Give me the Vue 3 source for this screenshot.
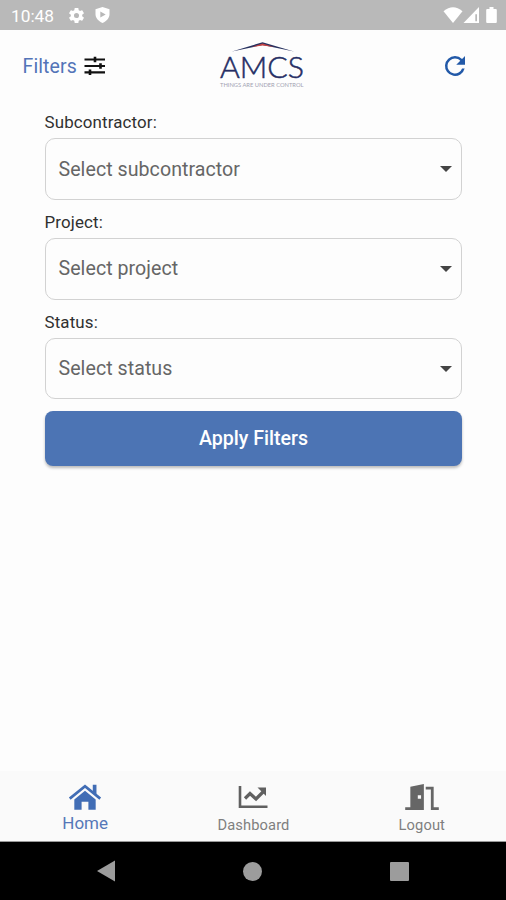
<script setup>
const fields = [
  { label: 'Subcontractor:', hint: 'Select subcontractor' },
  { label: 'Project:', hint: 'Select project' },
  { label: 'Status:', hint: 'Select status' },
]
</script>

<template>
  <div class="screen">
    <div class="status">
      <span class="time">10:48</span>
      <svg class="gear" width="19" height="19" viewBox="0 0 24 24"><path fill="#fff" fill-rule="evenodd" d="M19.14 12.94a7 7 0 0 0 0-1.88l2.03-1.58c.18-.14.23-.4.12-.61l-1.92-3.32c-.12-.22-.37-.29-.59-.22l-2.39.96a7 7 0 0 0-1.62-.94L14.4 2.81a.48.48 0 0 0-.48-.41h-3.84a.47.47 0 0 0-.47.41l-.36 2.54a7 7 0 0 0-1.62.94l-2.39-.96a.47.47 0 0 0-.59.22L2.74 8.87a.47.47 0 0 0 .12.61l2.03 1.58a7 7 0 0 0 0 1.88l-2.03 1.58c-.18.14-.23.4-.12.61l1.92 3.32c.12.22.37.29.59.22l2.39-.96c.5.38 1.03.7 1.62.94l.36 2.54c.05.24.24.41.48.41h3.84c.24 0 .44-.17.47-.41l.36-2.54a7 7 0 0 0 1.62-.94l2.39.96c.22.08.47 0 .59-.22l1.92-3.32a.47.47 0 0 0-.12-.61zM12 15.2a3.2 3.2 0 1 1 0-6.4 3.2 3.2 0 0 1 0 6.4z" /></svg>
      <svg class="shield" width="15" height="16" viewBox="0 0 15 16"><path fill="#fff" d="M7.500 0 14.500 2.200V7c0 4-2.600 7-7 8.900C3.100 14 .5 11 .5 7V2.200z" /><path fill="#b8b8b8" d="M5.300 4.600v6l5.400-3z" /></svg>
      <svg class="signals" width="56" height="18" viewBox="0 0 56 18">
        <path fill="#fff" d="M.5 5.200Q10 -2.600 19.500 5.200L10 17z" />
        <path fill="#fff" fill-rule="evenodd" d="M36 1v16H20.500zM32.300 8.300v7h1.700v-7z" />
        <path fill="#fff" d="M46.500 1h4v2h2.300q1 0 1 1v12q0 1-1 1h-8.600q-1 0-1-1V4q0-1 1-1h2.300z" />
      </svg>
    </div>

    <header class="bar">
      <div class="filters">
        <span>Filters</span>
        <svg width="22" height="20" viewBox="0 0 22 20" fill="none" stroke="#111" stroke-width="2.200"><path d="M.5 3.500h20.500M.5 10h20.500M.5 16.300h20.500" /><path stroke-width="2.600" d="M11 .7v5.600M16.500 7.200v5.600M6 13.500v5.600" /></svg>
      </div>
      <svg class="logo" width="90" height="50" viewBox="0 0 90 50">
        <path fill="#26305f" d="M14 10.500 44.500 1.200 76 10.500 44.500 4z" />
        <path fill="#c84343" d="M34 5.900 44.500 2.400 56 5.900 44.500 4.600z" />
        <text class="brand" x="2" y="37.200" textLength="84" lengthAdjust="spacingAndGlyphs">AMCS</text>
        <text class="tag" x="2" y="46.400" textLength="83.500" lengthAdjust="spacingAndGlyphs">THINGS ARE UNDER CONTROL</text>
      </svg>
      <svg class="refresh" width="30" height="30" viewBox="0 0 24 24"><path fill="#2259a8" d="M17.650 6.350A7.960 7.960 0 0 0 12 4a8 8 0 1 0 7.730 10h-2.080A6 6 0 1 1 12 6c1.660 0 3.140.69 4.220 1.780L13 11h7V4z" /></svg>
    </header>

    <main class="form">
      <div v-for="f in fields" :key="f.label" class="field">
        <label>{{ f.label }}</label>
        <div class="select">
          <span>{{ f.hint }}</span>
          <svg width="12" height="6" viewBox="0 0 12 6"><path fill="#444" d="M0 0h12L6 6z" /></svg>
        </div>
      </div>
      <button class="apply">Apply Filters</button>
    </main>

    <nav class="tabs">
      <div class="tab active">
        <svg width="34" height="28" viewBox="-.5 0 35 28"><path fill="none" stroke="#416db5" stroke-width="2.800" d="M1.300 15.700 17 2.900l15.700 12.800" /><path fill="#416db5" d="M25 1.500h3.800v10L25 8.300zM17 7.500l11 9V27h-7.500v-8h-7v8H6V16.500z" /></svg>
        <span>Home</span>
      </div>
      <div class="tab">
        <svg width="34" height="28" viewBox="0 0 34 28"><path fill="none" stroke="#606060" stroke-width="2.600" d="M4 3v20.700h27.500" /><path fill="none" stroke="#606060" stroke-width="3.200" d="m9 15.500 5-5 6 5.500 7.500-7.500" /><path fill="#606060" d="M21.500 4.500H30V13z" /></svg>
        <span>Dashboard</span>
      </div>
      <div class="tab">
        <svg width="38" height="30" viewBox="0 0 38 30"><path fill="#666" fill-rule="evenodd" d="M6.500 4 21 1v28H1v-3h5.500zM14.500 13v4H18v-4z" /><path fill="none" stroke="#666" stroke-width="3" d="M23 5.500h7v22h7" /></svg>
        <span>Logout</span>
      </div>
    </nav>

    <div class="system">
      <svg width="18" height="22" viewBox="0 0 18 22"><path fill="#9c9c9c" d="M0 11 18 .5v21z" /></svg>
      <i class="circle"></i>
      <i class="square"></i>
    </div>
  </div>
</template>

<style>
body { margin: 0; }
</style>

<style scoped>
.screen { width: 506px; height: 900px; display: flex; flex-direction: column; background: #fdfdfd; font-family: Roboto, sans-serif; overflow: hidden; }
svg { display: block; flex: none; }
.status { height: 30px; flex: none; box-sizing: border-box; padding: 0 7px 0 11px; display: flex; align-items: center; background: #b9b9b9; color: #fff; }
.time { width: 55.500px; font-size: 17.300px; line-height: 30px; padding-top: 2px; }
.shield { margin-left: 9.500px; }
.signals { margin-left: auto; }
.bar { height: 71px; flex: none; display: grid; grid-template-columns: 195px 116px 195px; align-items: center; }
.filters { display: flex; align-items: center; gap: 6px; padding-left: 22.500px; color: #5374b8; font-size: 19.500px; letter-spacing: .1px; }
.filters span { width: 55px; white-space: nowrap; padding-top: 1px; }
.logo { margin-left: 23px; }
.brand { font-family: Lato, sans-serif; font-weight: 300; font-size: 29px; fill: #252d64; stroke: #252d64; stroke-width: .5px; }
.tag { font-family: Lato, sans-serif; font-size: 5.300px; fill: #a2a2b2; }
.refresh { margin-left: 129px; }
.form { flex: 1; padding: 11.400px 43.600px 0 44.500px; }
.field { height: 99.700px; }
label { display: block; height: 26px; line-height: 20.500px; font-size: 16.900px; letter-spacing: .15px; color: #303030; }
.select { height: 61.500px; box-sizing: border-box; border: 1.500px solid #d2d2d2; border-radius: 10px; padding: 0 9.500px 0 13px; display: flex; align-items: center; justify-content: space-between; font-size: 19.600px; letter-spacing: .05px; color: #666; }
.apply { display: block; width: 100%; height: 55px; border: 0; border-radius: 8px; background: #4c74b4; color: #fff; font: 500 19.600px Roboto, sans-serif; box-shadow: 0 2px 3px #0004; }
.tabs { height: 71px; flex: none; box-sizing: border-box; display: grid; grid-template-columns: repeat(3, 1fr); background: #fafafa; border-bottom: 1px solid #999; padding-left: 1px; }
.tab { display: flex; flex-direction: column; align-items: center; padding-top: 12px; color: #7f7f7f; font-size: 14.700px; letter-spacing: .1px; }
.tab svg { height: 28px; }
.tab span { line-height: 20px; margin-top: 4px; }
.active { color: #5577b8; font-size: 17px; letter-spacing: 0; }
.active span { margin-top: 2px; }
.system { height: 58px; flex: none; box-sizing: border-box; padding: 0 97px; display: flex; align-items: center; justify-content: space-between; background: #000; }
.circle { width: 19px; height: 19px; border-radius: 50%; background: #9c9c9c; }
.square { width: 19px; height: 19px; border-radius: 1px; background: #9c9c9c; }
</style>
